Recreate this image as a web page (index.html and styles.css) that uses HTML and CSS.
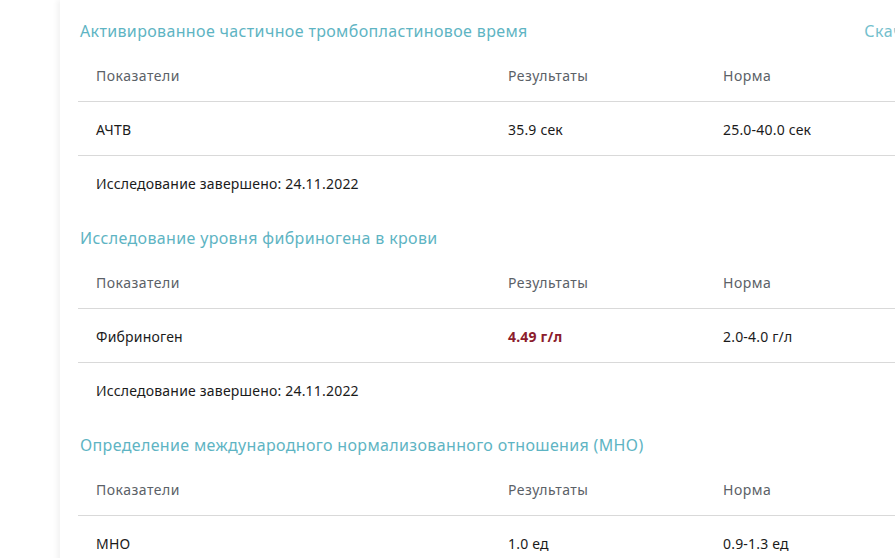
FILE: index.html
```html
<!DOCTYPE html>
<html lang="ru">
<head>
<meta charset="utf-8">
<link rel="stylesheet" href="styles.css">
</head>
<body>
<div class="page">
  <div class="card">
    <section class="study">
      <div class="study-head">
        <h2 class="study-title">Активированное частичное тромбопластиновое время</h2>
        <a class="download">Скачать</a>
      </div>
      <div class="row head">
        <div class="cell">Показатели</div>
        <div class="cell">Результаты</div>
        <div class="cell">Норма</div>
      </div>
      <div class="row data">
        <div class="cell">АЧТВ</div>
        <div class="cell">35.9 сек</div>
        <div class="cell">25.0-40.0 сек</div>
      </div>
      <div class="done">Исследование завершено: 24.11.2022</div>
    </section>
    <section class="study">
      <div class="study-head">
        <h2 class="study-title">Исследование уровня фибриногена в крови</h2>
      </div>
      <div class="row head">
        <div class="cell">Показатели</div>
        <div class="cell">Результаты</div>
        <div class="cell">Норма</div>
      </div>
      <div class="row data">
        <div class="cell">Фибриноген</div>
        <div class="cell high">4.49 г/л</div>
        <div class="cell">2.0-4.0 г/л</div>
      </div>
      <div class="done">Исследование завершено: 24.11.2022</div>
    </section>
    <section class="study">
      <div class="study-head">
        <h2 class="study-title">Определение международного нормализованного отношения (МНО)</h2>
      </div>
      <div class="row head">
        <div class="cell">Показатели</div>
        <div class="cell">Результаты</div>
        <div class="cell">Норма</div>
      </div>
      <div class="row data">
        <div class="cell">МНО</div>
        <div class="cell">1.0 ед</div>
        <div class="cell">0.9-1.3 ед</div>
      </div>
    </section>
  </div>
</div>
</body>
</html>
```
FILE: styles.css
```css
html, body {
  margin: 0;
  padding: 0;
  background: #ffffff;
  overflow: hidden;
}
body {
  font-family: "Noto Sans", "DejaVu Sans", sans-serif;
  color: #1b1b1b;
}
.page {
  padding-left: 60px;
  width: 1000px;
}
.card {
  background: #ffffff;
  box-shadow: -3px 0 5px rgba(0, 0, 0, 0.05);
  padding: 21px 0 0 18px;
  width: 852px;
  min-height: 560px;
}
.study-head {
  display: flex;
  justify-content: space-between;
  align-items: center;
  height: 20px;
  margin-bottom: 7px;
  padding-left: 2px;
}
.study + .study .study-head {
  margin-top: 19px;
}
.study-title {
  margin: 0;
  font-size: 16px;
  font-weight: 400;
  letter-spacing: 0.35px;
  line-height: 20px;
  color: #5eb4c3;
}
.download {
  font-size: 16px;
  letter-spacing: 0.6px;
  line-height: 20px;
  color: #74c0cd;
}
.row {
  display: grid;
  grid-template-columns: 412px 215px 1fr;
  height: 53px;
  align-items: center;
  border-bottom: 1px solid #d9d9d9;
}
.cell {
  padding: 2px 0 0 18px;
  font-size: 14px;
  letter-spacing: 0.2px;
}
.head .cell {
  color: #5b6167;
  letter-spacing: 0.5px;
}
.high {
  color: #8c1c2c;
  font-weight: 700;
}
.done {
  height: 53px;
  display: flex;
  align-items: center;
  padding: 2px 0 0 18px;
  box-sizing: border-box;
  font-size: 14px;
  letter-spacing: 0.2px;
}
```
